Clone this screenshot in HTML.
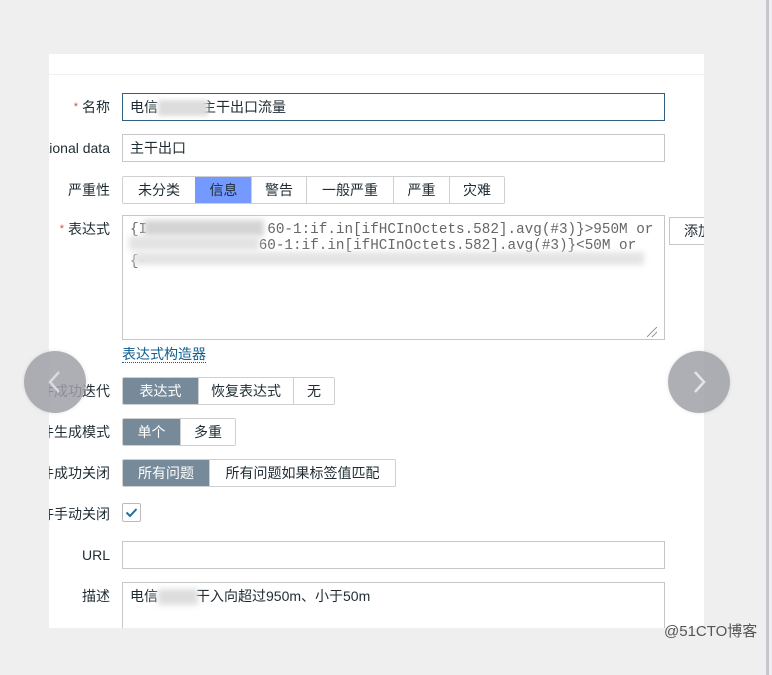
<!DOCTYPE html>
<html><head><meta charset="utf-8"><style>
*{box-sizing:border-box;margin:0;padding:0}
body{width:772px;height:675px;background:#f0efef;position:relative;overflow:hidden;font-family:"Liberation Sans","Noto Sans CJK SC",sans-serif;font-size:14px;color:#1f2c33}
.panel{position:absolute;left:49px;top:54px;width:655px;height:574px;background:#fff;overflow:hidden}
.topline{position:absolute;left:0;top:20px;width:655px;height:1px;background:#f0f0f0}
.lbl{position:absolute;left:0;width:61px;height:28px;display:flex;justify-content:flex-end;align-items:center;overflow:hidden;white-space:nowrap;color:#1f2c33}
.lbl .r{color:#d64e4e;margin-right:4px;font-size:11px}
.inp{position:absolute;left:73px;width:543px;height:28px;border:1px solid #c6c6c6;padding:0 7px;line-height:26px;background:#fff}
.seg{position:absolute;left:73px;height:28px;display:flex;border:1px solid #cfcfcf;border-radius:2px;overflow:hidden}
.seg div{height:26px;line-height:26px;text-align:center;border-left:1px solid #cfcfcf;background:#fff}
.seg div:first-child{border-left:none}
.seg .on{background:#768a99;color:#fff;border-color:#768a99}
.seg .blue{background:#7499ff;color:#1f2c33;border-color:#7499ff}
.mono{font-family:"Liberation Mono",monospace;font-size:14.3px;color:#666}
.blob{position:absolute;background:#d4d4d4;filter:blur(3px)}
.circ{position:absolute;width:62px;height:62px;border-radius:50%;background:rgba(160,160,168,.85);box-shadow:0 0 4px rgba(0,0,0,.1)}
.circ svg{position:absolute;left:21px;top:19px}
</style></head><body>
<div class="panel">
<div class="topline"></div>

<div class="lbl" style="top:39px"><span class="r">*</span>名称</div>
<div class="inp" style="top:39px;border-color:#2f5f7f">电信<span style="display:inline-block;width:50px;height:16px;background:#ddd;vertical-align:middle;filter:blur(2px);margin:0 -6px 0 0"></span>主干出口流量</div>

<div class="lbl" style="top:80px">Operational data</div>
<div class="inp" style="top:80px">主干出口</div>

<div class="lbl" style="top:122px">严重性</div>
<div class="seg" style="top:122px">
<div style="width:72px">未分类</div><div class="blue" style="width:56px">信息</div><div style="width:55px">警告</div><div style="width:87px">一般严重</div><div style="width:56px">严重</div><div style="width:55px">灾难</div></div>

<div class="lbl" style="top:161px"><span class="r">*</span>表达式</div>
<div class="inp mono" style="top:161px;height:125px;line-height:16px;padding:6px 7px;white-space:pre;overflow:hidden">{I              60-1:if.in[ifHCInOctets.582].avg(#3)}&gt;950M or
               60-1:if.in[ifHCInOctets.582].avg(#3)}&lt;50M or
{-</div>
<div class="blob" style="left:95px;top:166px;width:120px;height:16px"></div>
<div class="blob" style="left:80px;top:182px;width:130px;height:14px;background:#e2e2e2"></div>
<div class="blob" style="left:85px;top:198px;width:510px;height:13px;background:#e4e4e4"></div>
<div style="position:absolute;left:598px;top:273px;width:10px;height:10px;background:linear-gradient(135deg,transparent 45%,#888 46%,#888 52%,transparent 53%,transparent 70%,#888 71%,#888 77%,transparent 78%)"></div>
<div style="position:absolute;left:620px;top:163px;width:50px;height:28px;border:1px solid #c6c6c6;line-height:26px;padding-left:14px">添加</div>

<div style="position:absolute;left:73px;top:292px;color:#0f5d8f;border-bottom:1px dotted #0f5d8f;line-height:16px">表达式构造器</div>

<div class="lbl" style="top:323px">事件成功迭代</div>
<div class="seg" style="top:323px"><div class="on" style="width:75px">表达式</div><div style="width:95px">恢复表达式</div><div style="width:41px">无</div></div>

<div class="lbl" style="top:364px">问题事件生成模式</div>
<div class="seg" style="top:364px"><div class="on" style="width:57px">单个</div><div style="width:55px">多重</div></div>

<div class="lbl" style="top:405px">事件成功关闭</div>
<div class="seg" style="top:405px"><div class="on" style="width:86px">所有问题</div><div style="width:186px">所有问题如果标签值匹配</div></div>

<div class="lbl" style="top:446px">允许手动关闭</div>
<div style="position:absolute;left:73px;top:449px;width:19px;height:19px;border:1px solid #bbb;border-radius:2px">
<svg width="17" height="17" viewBox="0 0 17 17"><path d="M3.5 8.5 L7 12 L13.5 5" stroke="#1e6fa8" stroke-width="2" fill="none"/></svg></div>

<div class="lbl" style="top:487px">URL</div>
<div class="inp" style="top:487px"></div>

<div class="lbl" style="top:528px">描述</div>
<div class="inp" style="top:528px;height:60px;padding-top:2px;line-height:22px">电信<span style="display:inline-block;width:40px;height:16px;background:#ddd;vertical-align:middle;filter:blur(3px);margin:0 -2px 0 0"></span>干入向超过950m、小于50m</div>
</div>

<div class="circ" style="left:24px;top:351px"><svg width="20" height="24" viewBox="0 0 20 24"><path d="M14 2 L5 12 L14 22" stroke="#d9d9de" stroke-width="2.5" fill="none"/></svg></div>
<div class="circ" style="left:668px;top:351px"><svg width="20" height="24" viewBox="0 0 20 24"><path d="M6 2 L15 12 L6 22" stroke="#e4e4e8" stroke-width="2.5" fill="none"/></svg></div>

<div style="position:absolute;left:766px;top:0;width:3px;height:675px;background:#c6c8cf"></div>
<div style="position:absolute;left:664px;top:620px;font-size:15px;color:#555">@51CTO博客</div>
</body></html>
